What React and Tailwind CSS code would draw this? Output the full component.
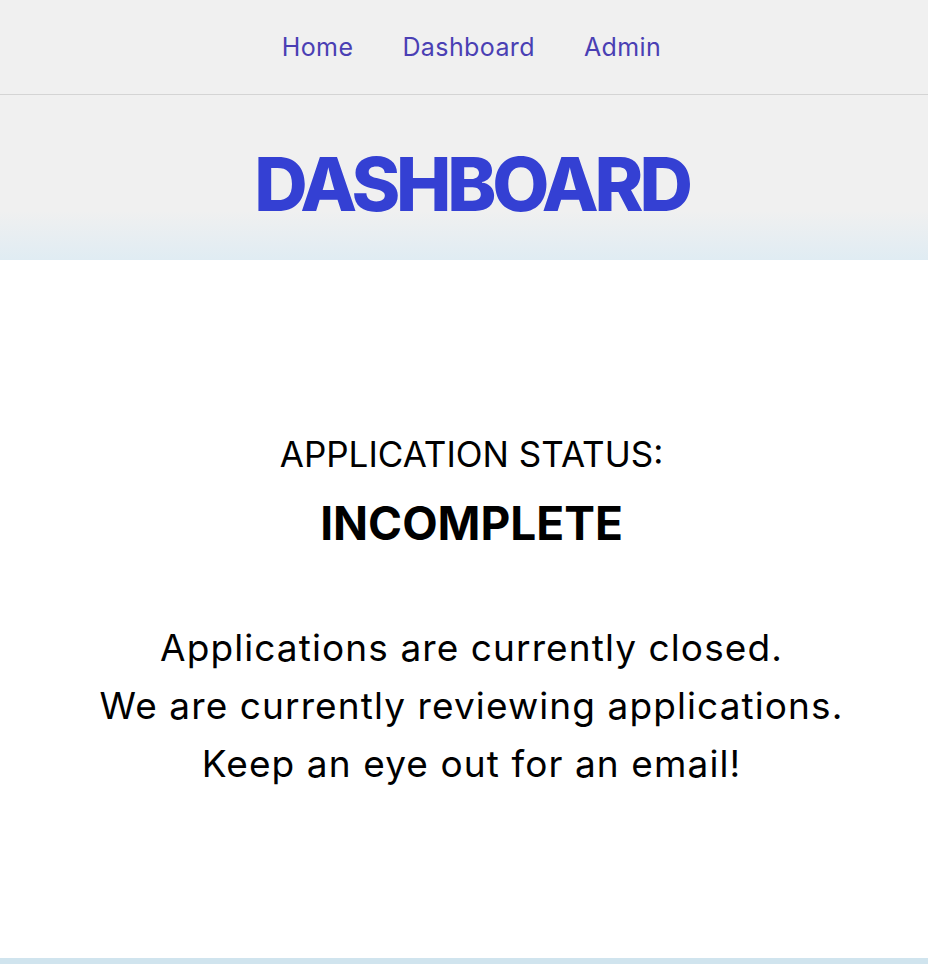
import React from "react";

const links = ["Home", "Dashboard", "Admin"];

function Nav() {
  return (
    <nav className="h-[95px] border-b border-[#d4d4d4] bg-[#f0f0f0] flex items-center justify-center gap-[49px]">
      {links.map((label) => (
        <a key={label} href="#" className="text-[25px] tracking-[0.4px] text-[#4a3fb4] leading-none">
          {label}
        </a>
      ))}
    </nav>
  );
}

export default function App() {
  return (
    <div className="min-h-[964px] flex flex-col bg-white text-black font-['Inter',sans-serif] [&>*]:pl-[15px]">
      <Nav />
      <header className="h-[165px] pt-[12px] bg-gradient-to-b from-[#f0f0f0] from-70% to-[#e0ecf3] flex items-center justify-center">
        <h1 className="text-[74px] font-extrabold tracking-[-4.2px] text-[#3440d3] leading-none">DASHBOARD</h1>
      </header>
      <main className="flex-1 flex flex-col items-center text-center pt-[177px]">
        <h2 className="text-[35px] leading-none">APPLICATION STATUS:</h2>
        <h3 className="mt-[28px] text-[46px] font-bold leading-none">INCOMPLETE</h3>
        <div className="mt-[73px] text-[37px] tracking-[1.1px] leading-[58px]">
          <p>Applications are currently closed.</p>
          <p>We are currently reviewing applications.</p>
          <p>Keep an eye out for an email!</p>
        </div>
      </main>
      <div className="h-[6px] bg-[#d0e4ee]" />
    </div>
  );
}
